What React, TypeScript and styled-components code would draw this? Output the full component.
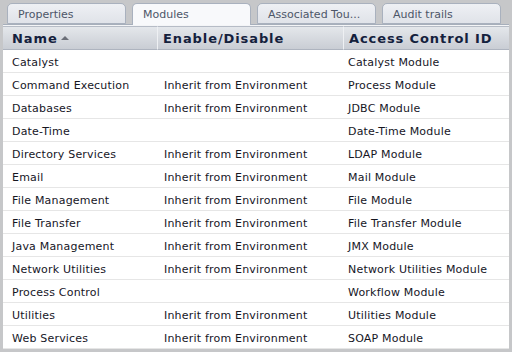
import React from "react";
import styled, { createGlobalStyle } from "styled-components";

const Global = createGlobalStyle`
  html, body { margin: 0; padding: 0; }
  body { font-family: "DejaVu Sans", Verdana, sans-serif; font-size: 11px; background: #c8c8c8; }
`;

const Frame = styled.div`
  width: 512px;
  height: 352px;
  box-sizing: border-box;
  background: #c6c7c9;
  padding: 3px 3px 3px 3px;
  display: flex;
  flex-direction: column;
`;

const TabStrip = styled.div`
  display: flex;
  gap: 6px;
  padding-left: 4px;
  height: 21px;
  border-bottom: 1px solid #a7afbb;
`;

const Tab = styled.div<{ $active?: boolean }>`
  width: 119px;
  box-sizing: border-box;
  height: ${(p) => (p.$active ? "22px" : "21px")};
  border: 1px solid #a9b1be;
  border-bottom: ${(p) => (p.$active ? "none" : "1px solid #a9b1be")};
  border-radius: 5px 5px 0 0;
  background: ${(p) =>
    p.$active ? "#f8f9fb" : "linear-gradient(#eef0f4, #e0e3e9)"};
  color: #4d5668;
  line-height: 13px;
  padding: 4px 0 0 10px;
  white-space: nowrap;
  overflow: hidden;
  position: relative;
  z-index: ${(p) => (p.$active ? 1 : 0)};
`;

const Panel = styled.div`
  flex: 1;
  background: #fff;
  border-top: 1px solid #f4f5f7;
  display: flex;
  flex-direction: column;
`;

const Grid = styled.div`
  display: grid;
  grid-template-columns: 154px 186px 1fr;
`;

const HeadCell = styled.div<{ $sep?: boolean }>`
  height: 24px;
  box-sizing: border-box;
  background: linear-gradient(#e4e7eb, #c9cdd4);
  border-top: 1px solid #b6bcc6;
  border-bottom: 1px solid #aeb4bf;
  border-left: ${(p) => (p.$sep ? "1px solid #eef0f3" : "none")};
  font-weight: bold;
  font-size: 13px;
  letter-spacing: 0.9px;
  line-height: 15px;
  color: #14213d;
  padding: 4px 0 0 ${(p) => (p.$sep ? "5px" : "9px")};
  display: flex;
  align-items: flex-start;
  gap: 3px;
  white-space: nowrap;
`;

const SortArrow = styled.span`
  width: 0;
  height: 0;
  border-left: 4px solid transparent;
  border-right: 4px solid transparent;
  border-bottom: 4px solid #6b6f78;
  margin-top: 5px;
`;

const Cell = styled.div<{ $col: number }>`
  height: 23px;
  box-sizing: border-box;
  border-bottom: 1px solid #e6e6e6;
  color: #16161f;
  line-height: 13px;
  letter-spacing: 0.2px;
  padding: 6px 0 0 ${(p) => (p.$col === 0 ? "9px" : p.$col === 1 ? "7px" : "5px")};
  white-space: nowrap;
  overflow: hidden;
`;

const tabs = ["Properties", "Modules", "Associated Tou...", "Audit trails"];

const rows: [string, string, string][] = [
  ["Catalyst", "", "Catalyst Module"],
  ["Command Execution", "Inherit from Environment", "Process Module"],
  ["Databases", "Inherit from Environment", "JDBC Module"],
  ["Date-Time", "", "Date-Time Module"],
  ["Directory Services", "Inherit from Environment", "LDAP Module"],
  ["Email", "Inherit from Environment", "Mail Module"],
  ["File Management", "Inherit from Environment", "File Module"],
  ["File Transfer", "Inherit from Environment", "File Transfer Module"],
  ["Java Management", "Inherit from Environment", "JMX Module"],
  ["Network Utilities", "Inherit from Environment", "Network Utilities Module"],
  ["Process Control", "", "Workflow Module"],
  ["Utilities", "Inherit from Environment", "Utilities Module"],
  ["Web Services", "Inherit from Environment", "SOAP Module"],
];

export default function App() {
  return (
    <>
      <Global />
      <Frame>
        <TabStrip>
          {tabs.map((t) => (
            <Tab key={t} $active={t === "Modules"}>
              {t}
            </Tab>
          ))}
        </TabStrip>
        <Panel>
          <Grid>
            <HeadCell>
              Name <SortArrow />
            </HeadCell>
            <HeadCell $sep>Enable/Disable</HeadCell>
            <HeadCell $sep>Access Control ID</HeadCell>
            {rows.map((r) =>
              r.map((c, i) => (
                <Cell key={r[0] + i} $col={i}>
                  {c}
                </Cell>
              ))
            )}
          </Grid>
        </Panel>
      </Frame>
    </>
  );
}
